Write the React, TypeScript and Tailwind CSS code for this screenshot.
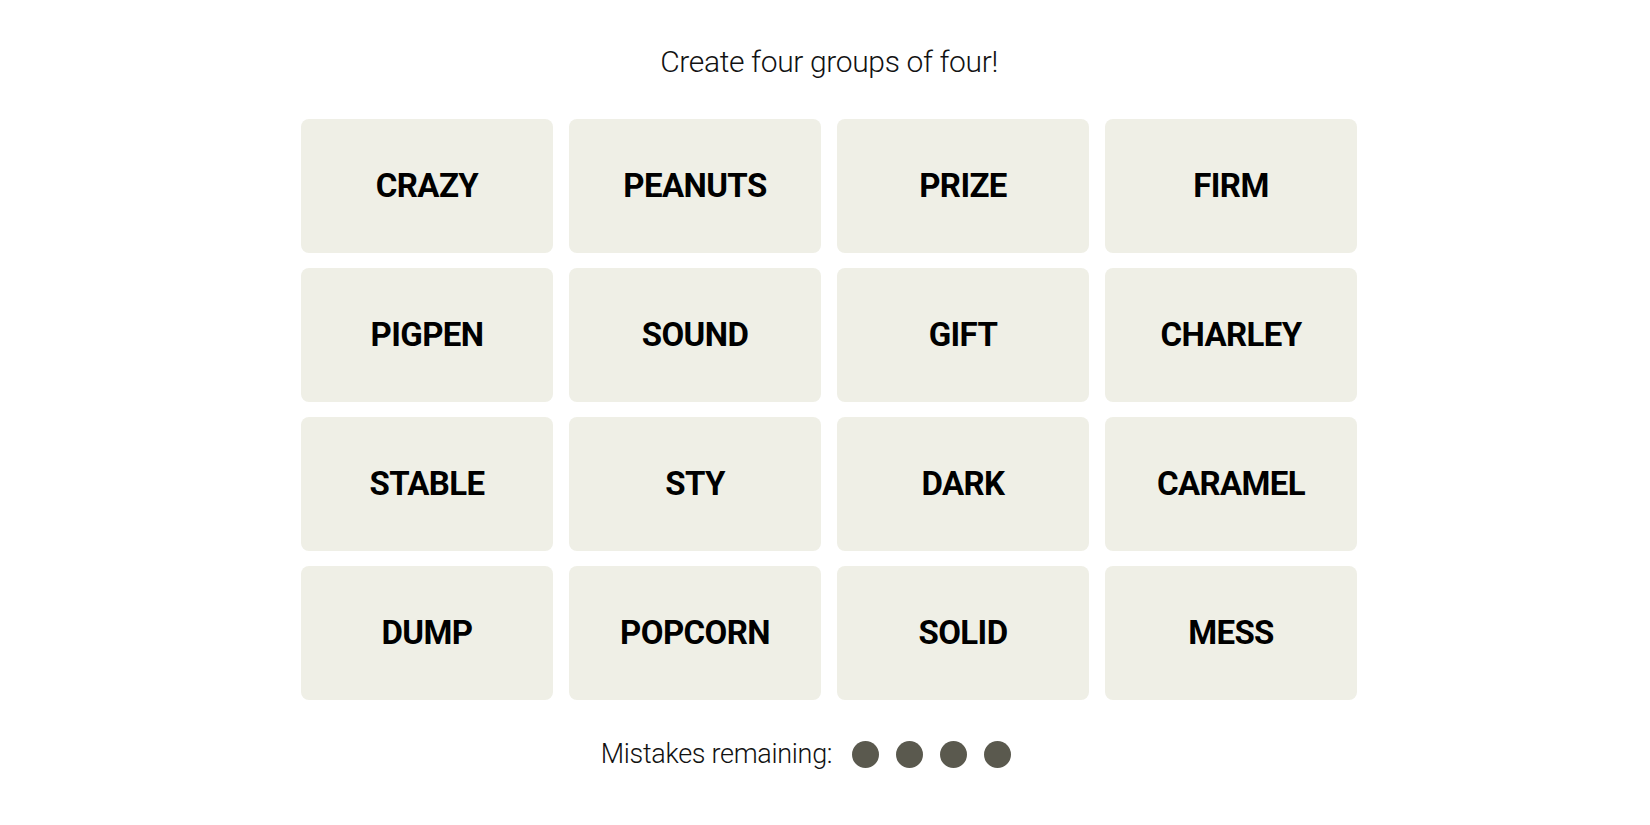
const words = [
  'CRAZY', 'PEANUTS', 'PRIZE', 'FIRM',
  'PIGPEN', 'SOUND', 'GIFT', 'CHARLEY',
  'STABLE', 'STY', 'DARK', 'CARAMEL',
  'DUMP', 'POPCORN', 'SOLID', 'MESS',
]

export default function App() {
  return (
    <div className="min-h-screen bg-white text-[#121212]" style={{ fontFamily: 'Roboto, "Liberation Sans", sans-serif' }}>
      <div className="flex flex-col items-center pt-[45px] pl-[8px]">
        <p className="text-[30px] leading-[34px] font-light tracking-[-0.35px]">Create four groups of four!</p>

        <div className="mt-[40px] grid grid-cols-[repeat(4,252px)] gap-x-[16px] gap-y-[15px]">
          {words.map((word) => (
            <button
              key={word}
              type="button"
              className="flex h-[134px] items-center justify-center rounded-[8px] bg-[#efefe6] text-[33px] font-bold tracking-[-0.6px] text-black"
            >
              {word}
            </button>
          ))}
        </div>

        <div className="mt-[37px] mr-[46px] flex items-center">
          <span className="text-[27px] leading-[34px] font-light text-[#121212] tracking-[-0.3px]">Mistakes remaining:</span>
          <div className="ml-[20px] flex gap-[17px]">
            {[0, 1, 2, 3].map((i) => (
              <span key={i} className="block h-[27px] w-[27px] rounded-full bg-[#5a594e]" />
            ))}
          </div>
        </div>
      </div>
    </div>
  )
}
